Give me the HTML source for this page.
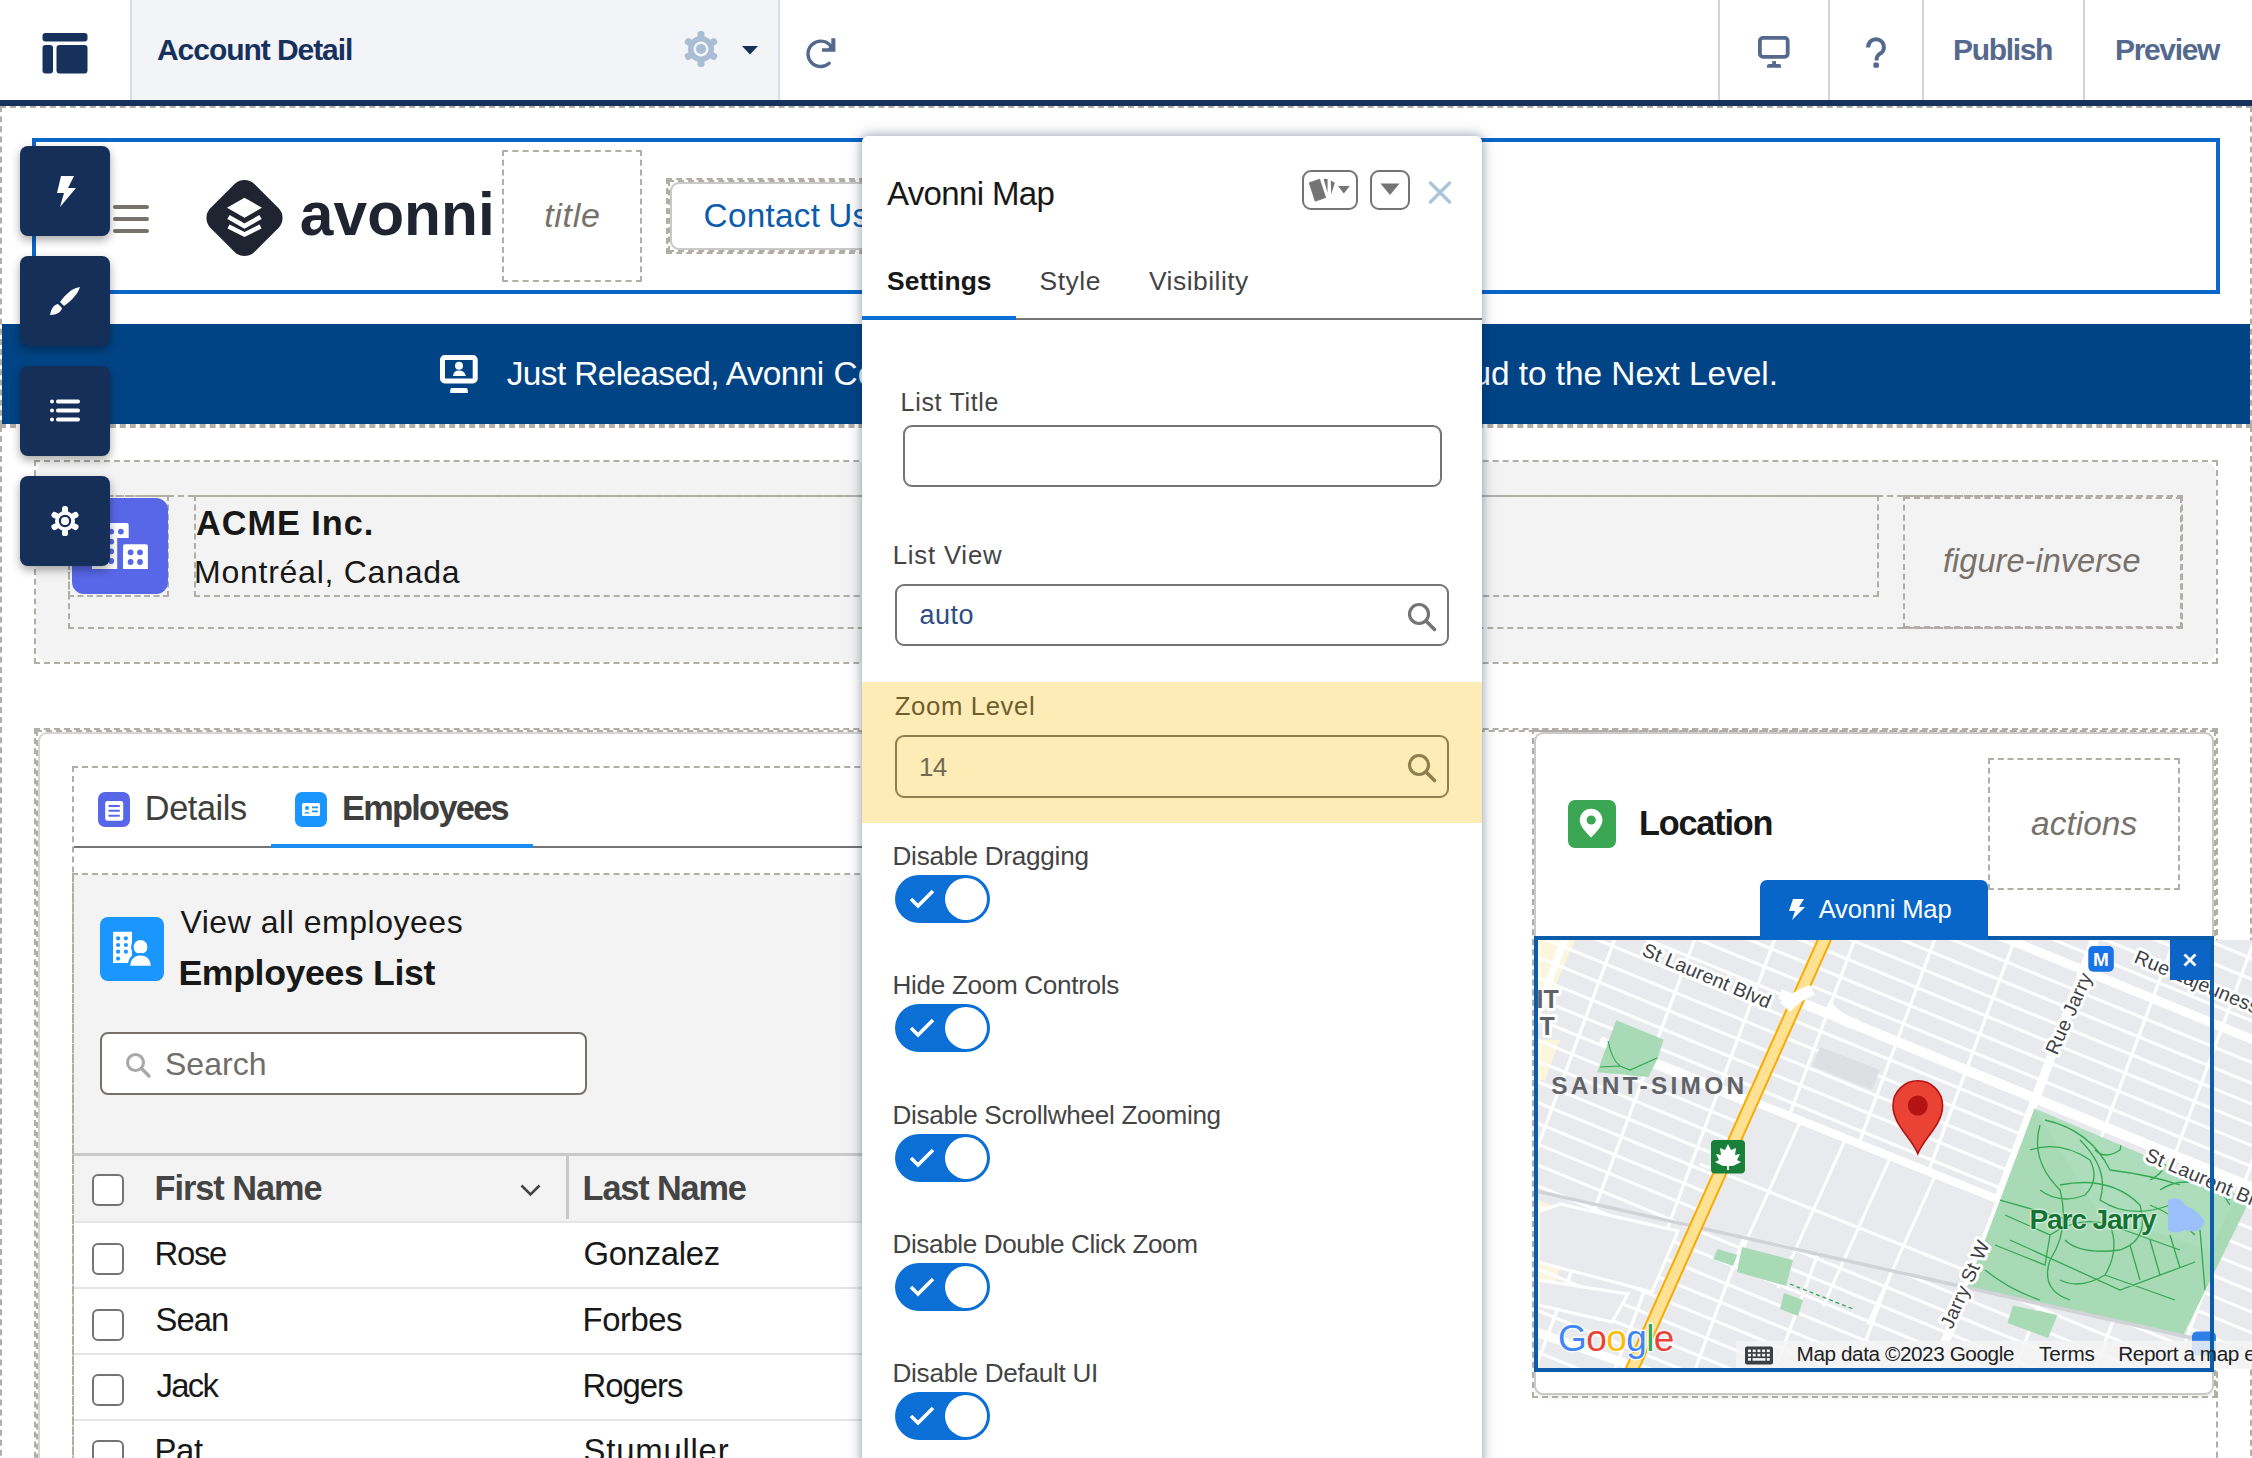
<!DOCTYPE html>
<html><head><meta charset="utf-8"><title>Account Detail</title><style>
html,body{margin:0;padding:0;width:2252px;height:1458px;overflow:hidden;background:#fff;position:relative;font-family:"Liberation Sans",sans-serif}
.t{position:absolute;white-space:nowrap;line-height:1}
.a{position:absolute;box-sizing:border-box}
.d{position:absolute;box-sizing:border-box;border:2px dashed #b1ada7}
svg{position:absolute;overflow:visible}
.tb{position:absolute;left:20px;width:90px;height:90px;background:#152f59;border-radius:8px;box-shadow:0 4px 10px rgba(0,0,0,.35)}
.cb{position:absolute;left:92px;width:32px;height:32px;box-sizing:border-box;border:2px solid #747474;border-radius:6px;background:#fff}
.tg{position:absolute;left:894.5px;width:95px;height:48px;border-radius:24px;background:#0b6fd6}
.tg:after{content:"";position:absolute;right:3px;top:3px;width:42px;height:42px;border-radius:50%;background:#fff}
</style></head><body>

<!-- ============ TOP BAR ============ -->
<div class="a" style="left:0;top:0;width:2252px;height:100px;background:#fff"></div>
<div class="a" style="left:130px;top:0;width:650px;height:100px;background:#f3f4f8;border-left:2px solid #d8dde6;border-right:2px solid #d8dde6"></div>
<div class="a" style="left:0;top:100px;width:2252px;height:6px;background:#16325c"></div>
<div class="a" style="left:1718px;top:0;width:2px;height:100px;background:#d4d4d4"></div>
<div class="a" style="left:1828px;top:0;width:2px;height:100px;background:#d4d4d4"></div>
<div class="a" style="left:1922px;top:0;width:2px;height:100px;background:#d4d4d4"></div>
<div class="a" style="left:2083px;top:0;width:2px;height:100px;background:#d4d4d4"></div>
<!-- logo icon -->
<svg style="left:42px;top:32px" width="46" height="42" viewBox="0 0 46 42"><rect x="0.5" y="1" width="45" height="8.5" rx="3" fill="#16325c"/><rect x="0.5" y="13" width="10.5" height="28.5" rx="3" fill="#16325c"/><rect x="14.5" y="13" width="31" height="28.5" rx="3" fill="#16325c"/></svg>
<!-- gear -->
<svg style="left:683px;top:31px" width="36" height="36" viewBox="-18 -18 36 36"><g fill="#a9bed5"><circle r="13"/><rect x="-3.5" y="-18" width="7" height="8" rx="3" transform="rotate(0)"/><rect x="-3.5" y="-18" width="7" height="8" rx="3" transform="rotate(60)"/><rect x="-3.5" y="-18" width="7" height="8" rx="3" transform="rotate(120)"/><rect x="-3.5" y="-18" width="7" height="8" rx="3" transform="rotate(180)"/><rect x="-3.5" y="-18" width="7" height="8" rx="3" transform="rotate(240)"/><rect x="-3.5" y="-18" width="7" height="8" rx="3" transform="rotate(300)"/></g><circle r="7.5" fill="#f3f4f8"/><circle r="5" fill="#a9bed5"/></svg>
<svg style="left:742px;top:45.5px" width="16" height="9" viewBox="0 0 16 9"><path d="M0 0H16L8 8.5Z" fill="#16325c"/></svg>
<!-- refresh -->
<svg style="left:796px;top:28px" width="50" height="50" viewBox="796 28 50 50"><path d="M829.2 63.3 A12.7 12.7 0 1 1 830.2 45.4" fill="none" stroke="#54698d" stroke-width="3.4" stroke-linecap="round"/><path d="M831.3 38.3 L835.4 38.3 L835.4 51.7 L822 51.7 L822 48.2 L828 48.2 L831.3 45Z" fill="#54698d"/></svg>
<!-- monitor -->
<svg style="left:1758px;top:36px" width="32" height="32" viewBox="0 0 32 32"><rect x="1.9" y="1.9" width="27.8" height="18.9" rx="3" fill="none" stroke="#54698d" stroke-width="3.8"/><rect x="14.2" y="25.1" width="3.8" height="3.5" fill="#54698d"/><path d="M9 31.8 V30.1 Q9 28.1 11 28.1 H21.1 Q23.1 28.1 23.1 30.1 V31.8Z" fill="#54698d"/></svg>
<!-- question -->
<svg style="left:1866px;top:38px" width="20" height="30" viewBox="0 0 20 30"><path d="M2.1 9.5 A7.9 7.9 0 1 1 15.5 14.8 Q10.8 17.3 10.6 20.8 V22.4" fill="none" stroke="#54698d" stroke-width="3.9"/><rect x="7.4" y="24.5" width="5.5" height="5.2" rx="1.5" fill="#54698d"/></svg>
<div class="t" style="left:157.00px;top:34.65px;font-size:30.00px;color:#16325c;font-weight:bold;letter-spacing:-1.053px;">Account Detail</div>
<div class="t" style="left:1953.00px;top:34.65px;font-size:30.00px;color:#54698d;font-weight:bold;letter-spacing:-1.336px;">Publish</div>
<div class="t" style="left:2115.00px;top:34.65px;font-size:30.00px;color:#54698d;font-weight:bold;letter-spacing:-1.346px;">Preview</div>

<!-- ============ HEADER SECTION ============ -->
<div class="d" style="left:0;top:106px;width:2252px;height:320px"></div>
<div class="d" style="left:0;top:426px;width:2252px;height:1100px"></div>
<div class="a" style="left:32px;top:138px;width:2188px;height:156px;border:4px solid #0a66c9"></div>
<div class="a" style="left:113px;top:204.5px;width:36px;height:4px;border-radius:2px;background:#78726c"></div>
<div class="a" style="left:113px;top:217px;width:36px;height:4px;border-radius:2px;background:#78726c"></div>
<div class="a" style="left:113px;top:229px;width:36px;height:4px;border-radius:2px;background:#78726c"></div>
<svg style="left:206px;top:180px" width="77" height="77" viewBox="0 0 77 77"><rect x="7.5" y="7" width="62" height="62" rx="14" transform="rotate(45 38.5 38)" fill="#1f2430"/><path d="M38.5 17.7 L56 27.7 L38.5 37.7 L21 27.7Z" fill="#fff"/><polyline points="22.5,37 38.5,46 54.5,37" fill="none" stroke="#fff" stroke-width="4.6"/><polyline points="22.5,46.5 38.5,54.5 54.5,46.5" fill="none" stroke="#fff" stroke-width="4.6"/></svg>
<div class="d" style="left:502px;top:150px;width:140px;height:132px"></div>
<div class="d" style="left:666px;top:178px;width:260px;height:76px"></div>
<div class="d" style="left:668px;top:180px;width:258px;height:72px"></div>
<div class="a" style="left:670px;top:182px;width:250px;height:68px;border:2px solid #c9c9c9;border-radius:9px;background:#fff"></div>
<div class="a" style="left:2px;top:324px;width:2248px;height:100px;background:#014486"></div>
<svg style="left:440px;top:355px" width="38" height="39" viewBox="0 0 38 39"><rect x="2.5" y="2.5" width="32.7" height="23.4" rx="2.2" fill="none" stroke="#fff" stroke-width="5"/><circle cx="19" cy="10.8" r="4" fill="#fff"/><path d="M13 21 Q13.6 15.6 19 15.6 Q24.4 15.6 25.8 21Z" fill="#fff"/><path d="M11.5 33 H26.3 Q27.8 33 27.8 35.5 V38 H10.2 V35.5 Q10.2 33 11.5 33Z" fill="#fff"/></svg>
<div class="t" style="left:299.80px;top:183.98px;font-size:60.38px;color:#1f2430;font-weight:bold;letter-spacing:0.090px;">avonni</div>
<div class="t" style="left:544.20px;top:198.27px;font-size:34.00px;color:#77716b;font-style:italic;letter-spacing:0.700px;">title</div>
<div class="t" style="left:703.60px;top:198.97px;font-size:33.29px;color:#0b5cab;letter-spacing:0.267px;">Contact</div>
<div class="t" style="left:828.30px;top:198.97px;font-size:33.29px;color:#0b5cab;letter-spacing:0.270px;">Us</div>
<div class="t" style="left:506.80px;top:356.85px;font-size:33.43px;color:#ffffff;letter-spacing:-0.639px;">Just Released, Avonni</div>
<div class="t" style="left:833.60px;top:356.85px;font-size:33.43px;color:#ffffff;">Components:</div>
<div class="t" style="left:1255.72px;top:356.85px;font-size:33.43px;color:#ffffff;letter-spacing:-0.047px;">Salesforce Cloud to the Next Level.</div>

<!-- ============ ACME ============ -->
<div class="a" style="left:36px;top:462px;width:2180px;height:200px;background:#f3f3f3;border-radius:12px"></div>
<div class="d" style="left:34px;top:460px;width:2184px;height:204px"></div>
<div class="d" style="left:68px;top:495px;width:2115px;height:134px"></div>
<div class="d" style="left:68px;top:495px;width:101px;height:102px"></div>
<div class="a" style="left:72px;top:498px;width:96px;height:96px;background:#5867e8;border-radius:12px"></div>
<svg style="left:72px;top:498px" width="96" height="96" viewBox="0 0 96 96"><path d="M20 71 V27 a2 2 0 0 1 2-2 H54.7 a2 2 0 0 1 2 2 V40 H45.2 V71 Z" fill="#fff"/><path d="M51 71 V48.3 a2 2 0 0 1 2-2 H73.9 a2 2 0 0 1 2 2 V71Z" fill="#fff"/><g fill="#5867e8"><circle cx="48.9" cy="33.6" r="2.9"/><circle cx="39.2" cy="33.6" r="2.9"/><circle cx="39.2" cy="43.6" r="2.9"/><circle cx="39.2" cy="53.3" r="2.9"/><circle cx="39.2" cy="63" r="2.9"/><circle cx="29.5" cy="33.6" r="2.9"/><circle cx="29.5" cy="43.6" r="2.9"/><circle cx="29.5" cy="53.3" r="2.9"/><circle cx="29.5" cy="63" r="2.9"/><circle cx="58.6" cy="54.3" r="2.9"/><circle cx="68" cy="54.3" r="2.9"/><circle cx="58.6" cy="64" r="2.9"/><circle cx="68" cy="64" r="2.9"/></g></svg>
<div class="d" style="left:194px;top:495px;width:1685px;height:102px"></div>
<div class="d" style="left:1903px;top:495px;width:280px;height:134px"></div>
<div class="d" style="left:1904px;top:497px;width:278px;height:131px;border-left:none"></div>
<div class="t" style="left:196.00px;top:506.03px;font-size:34.29px;color:#181818;font-weight:bold;letter-spacing:0.973px;">ACME Inc.</div>
<div class="t" style="left:194.00px;top:556.36px;font-size:32.00px;color:#181818;letter-spacing:0.748px;">Montréal, Canada</div>
<div class="t" style="left:1943.00px;top:545.34px;font-size:32.50px;color:#77716b;font-style:italic;letter-spacing:0.045px;">figure-inverse</div>

<!-- ============ TABS / TABLE ============ -->
<div class="d" style="left:34px;top:728px;width:2184px;height:800px"></div>
<div class="d" style="left:36px;top:730px;width:2180px;height:800px;border-right:none"></div>
<div class="a" style="left:38px;top:732px;width:1440px;height:800px;border:2px solid #d4d4d4;border-radius:9px;background:#fff"></div>
<div class="d" style="left:72px;top:766px;width:1400px;height:800px"></div>
<div class="a" style="left:74px;top:846px;width:1400px;height:2px;background:#747474"></div>
<div class="a" style="left:271px;top:843.5px;width:262px;height:4px;background:#1b8cf0"></div>
<div class="a" style="left:98px;top:792px;width:32px;height:35px;background:#5867e8;border-radius:7px"></div>
<svg style="left:98px;top:792px" width="32" height="35" viewBox="0 0 32 35"><rect x="7.2" y="9" width="18" height="19.7" rx="2.2" fill="#fff"/><g fill="#5867e8"><rect x="10.3" y="12.9" width="11.7" height="2" rx="1"/><rect x="10.3" y="17.8" width="11.7" height="2" rx="1"/><rect x="10.3" y="22.8" width="11.7" height="2" rx="1"/></g></svg>
<div class="a" style="left:295px;top:792px;width:32px;height:35px;background:#1b96ff;border-radius:7px"></div>
<svg style="left:295px;top:792px" width="32" height="35" viewBox="0 0 32 35"><rect x="7" y="11" width="18" height="13" rx="1.5" fill="#fff"/><g fill="#1b96ff"><circle cx="12" cy="16" r="2"/><path d="M9 21.5 q3-3.5 6 0z"/><rect x="17" y="14.5" width="6" height="1.8"/><rect x="17" y="18.5" width="6" height="1.8"/></g></svg>
<div class="d" style="left:72px;top:873px;width:1400px;height:700px"></div>
<div class="a" style="left:74px;top:875px;width:1400px;height:278px;background:#f3f3f3"></div>
<div class="a" style="left:100px;top:917px;width:64px;height:64px;background:#1b96ff;border-radius:8px"></div>
<svg style="left:100px;top:917px" width="64" height="64" viewBox="0 0 64 64"><path d="M13 46 V16 a1.2 1.2 0 0 1 1.2-1.2 H32 V46Z" fill="#fff"/><g fill="#1b96ff"><circle cx="18.1" cy="21.3" r="2.1"/><circle cx="25.9" cy="21.3" r="2.1"/><circle cx="18.1" cy="28" r="2.1"/><circle cx="25.9" cy="28" r="2.1"/><circle cx="18.1" cy="34.7" r="2.1"/><circle cx="25.9" cy="34.7" r="2.1"/><circle cx="18.1" cy="41.6" r="2.1"/></g><circle cx="40.5" cy="30" r="8.2" fill="#fff" stroke="#1b96ff" stroke-width="2.6"/><path d="M28.7 50.1 Q29.5 37.2 40.5 37.2 Q51.5 37.2 52.3 50.1Z" fill="#fff" stroke="#1b96ff" stroke-width="2.6" stroke-linejoin="round"/><rect x="26" y="50.1" width="30" height="4" fill="#1b96ff"/></svg>
<div class="a" style="left:100px;top:1032px;width:487px;height:63px;border:2px solid #77716b;border-radius:8px;background:#fff"></div>
<svg style="left:125px;top:1052px" width="26" height="26" viewBox="0 0 26 26"><circle cx="10.5" cy="10.5" r="8" fill="none" stroke="#a8a8a8" stroke-width="3"/><path d="M16.5 16.5L24 24" stroke="#a8a8a8" stroke-width="3.4" stroke-linecap="round"/></svg>
<div class="a" style="left:74px;top:1153px;width:1400px;height:3px;background:#c9c9c9"></div>
<div class="a" style="left:74px;top:1156px;width:1400px;height:65px;background:#f3f3f3"></div>
<div class="a" style="left:74px;top:1221px;width:1400px;height:300px;background:#fff"></div>
<div class="a" style="left:74px;top:1221px;width:1400px;height:2px;background:#e5e5e5"></div>
<div class="a" style="left:74px;top:1287px;width:1400px;height:2px;background:#e5e5e5"></div>
<div class="a" style="left:74px;top:1353px;width:1400px;height:2px;background:#e5e5e5"></div>
<div class="a" style="left:74px;top:1418.5px;width:1400px;height:2px;background:#e5e5e5"></div>
<div class="a" style="left:566px;top:1156px;width:2.5px;height:63px;background:#c9c9c9"></div>
<svg style="left:520px;top:1184px" width="21" height="13" viewBox="0 0 21 13"><path d="M1.5 1.5L10.5 10.5L19.5 1.5" fill="none" stroke="#444" stroke-width="2.6"/></svg>
<div class="cb" style="top:1174px"></div>
<div class="cb" style="top:1243px"></div>
<div class="cb" style="top:1308.7px"></div>
<div class="cb" style="top:1374.4px"></div>
<div class="cb" style="top:1440.1px"></div>
<div class="t" style="left:144.80px;top:791.03px;font-size:34.29px;color:#3e3e3c;letter-spacing:-0.401px;">Details</div>
<div class="t" style="left:342.00px;top:791.03px;font-size:34.29px;color:#3e3e3c;font-weight:bold;letter-spacing:-1.672px;">Employees</div>
<div class="t" style="left:180.40px;top:905.96px;font-size:32.00px;color:#181818;letter-spacing:0.528px;">View all employees</div>
<div class="t" style="left:178.40px;top:955.82px;font-size:35.71px;color:#181818;font-weight:bold;letter-spacing:-0.379px;">Employees List</div>
<div class="t" style="left:165.00px;top:1047.76px;font-size:32.00px;color:#706e6b;letter-spacing:0.021px;">Search</div>
<div class="t" style="left:154.50px;top:1171.03px;font-size:34.29px;color:#444444;font-weight:bold;letter-spacing:-1.005px;">First Name</div>
<div class="t" style="left:582.60px;top:1171.03px;font-size:34.29px;color:#444444;font-weight:bold;letter-spacing:-1.143px;">Last Name</div>
<div class="t" style="left:154.50px;top:1238.24px;font-size:32.86px;color:#181818;letter-spacing:-1.302px;">Rose</div>
<div class="t" style="left:583.60px;top:1238.24px;font-size:32.86px;color:#181818;letter-spacing:-0.319px;">Gonzalez</div>
<div class="t" style="left:155.50px;top:1303.94px;font-size:32.86px;color:#181818;letter-spacing:-0.980px;">Sean</div>
<div class="t" style="left:582.60px;top:1303.94px;font-size:32.86px;color:#181818;letter-spacing:-0.480px;">Forbes</div>
<div class="t" style="left:156.50px;top:1369.64px;font-size:32.86px;color:#181818;letter-spacing:-1.703px;">Jack</div>
<div class="t" style="left:582.60px;top:1369.64px;font-size:32.86px;color:#181818;letter-spacing:-1.011px;">Rogers</div>
<div class="t" style="left:154.50px;top:1435.34px;font-size:32.86px;color:#181818;letter-spacing:-0.386px;">Pat</div>
<div class="t" style="left:583.60px;top:1435.34px;font-size:32.86px;color:#181818;letter-spacing:0.777px;">Stumuller</div>

<!-- ============ LOCATION CARD ============ -->
<div class="a" style="left:1534px;top:732px;width:680px;height:663px;border:2px solid #c9c9c9;border-radius:9px;background:#fff;box-shadow:0 3px 4px rgba(0,0,0,.08)"></div>
<div class="d" style="left:1532px;top:728px;width:686px;height:670px"></div>
<div class="d" style="left:1533px;top:730px;width:683px;height:666px;border-left:none;border-bottom:none"></div>
<div class="a" style="left:1568px;top:800px;width:48px;height:48px;background:#3ba755;border-radius:7px"></div>
<svg style="left:1568px;top:800px" width="48" height="48" viewBox="0 0 48 48"><path d="M23.1 37.6 C18 32.2 11.8 26.5 11.8 20.1 A11.3 11.3 0 0 1 34.4 20.1 C34.4 26.5 28.2 32.2 23.1 37.6Z" fill="#fff"/><circle cx="23.2" cy="20" r="4.6" fill="#3ba755"/></svg>
<div class="d" style="left:1988px;top:758px;width:192px;height:132px"></div>
<div class="a" style="left:1760px;top:880px;width:228px;height:60px;background:#0766c8;border-radius:7px 7px 0 0;z-index:2"></div>
<svg style="z-index:3;left:1787px;top:899px" width="19" height="21" viewBox="0 0 19 21"><path d="M6 0H17L12 8H18L5 21L8 12H2Z" fill="#fff"/></svg>
<div class="t" style="left:1639.00px;top:806.43px;font-size:34.29px;color:#181818;font-weight:bold;letter-spacing:-1.205px;">Location</div>
<div class="t" style="left:2031.00px;top:807.09px;font-size:33.50px;color:#77716b;font-style:italic;letter-spacing:0.018px;">actions</div>
<div class="t" style="left:1818.70px;top:896.79px;font-size:25.57px;color:#ffffff;letter-spacing:-0.179px;z-index:3;">Avonni Map</div>
<svg style="left:1538px;top:940px" width="714" height="428" viewBox="1538 940 714 428">
<defs><clipPath id="mc"><rect x="1538" y="940" width="714" height="428"/></clipPath></defs>
<g clip-path="url(#mc)">
<rect x="1538" y="940" width="714" height="428" fill="#e8eaed"/>
<path d="M1538 940 L1575 940 L1545 1010 L1538 1010Z" fill="#fdf6df"/>
<path d="M1538 1040 L1560 1040 L1545 1080 L1538 1080Z" fill="#fdf6df"/>
<path d="M1538 1200 L1575 1215 L1550 1300 L1538 1300Z" fill="#fdf6df"/>
<path d="M1533 643.0 L2257 939.8 M1533 663.8 L2257 960.6 M1533 684.6 L2257 981.4 M1533 705.4 L2257 1002.2 M1533 726.2 L2257 1023.0 M1533 747.0 L2257 1043.8 M1533 767.8 L2257 1064.6 M1533 788.6 L2257 1085.4 M1533 809.4 L2257 1106.2 M1533 830.2 L2257 1127.0 M1533 851.0 L2257 1147.8 M1533 871.8 L2257 1168.6 M1533 892.6 L2257 1189.4 M1533 913.4 L2257 1210.2 M1533 934.2 L2257 1231.0 M1533 955.0 L2257 1251.8 M1533 975.8 L2257 1272.6 M1533 996.6 L2257 1293.4 M1533 1017.4 L2257 1314.2 M1533 1038.2 L2257 1335.0 M1533 1059.0 L2257 1355.8 M1533 1079.8 L2257 1376.6 M1533 1100.5 L2257 1397.4 M1533 1121.4 L2257 1418.2 M1533 1142.2 L2257 1439.0 M1533 1163.0 L2257 1459.8 M1533 1183.8 L2257 1480.6 M1533 1204.5 L2257 1501.4 M1533 1225.4 L2257 1522.2 M1533 1246.2 L2257 1543.0 M1533 1267.0 L2257 1563.8 M1533 1287.8 L2257 1584.6 M1533 1308.5 L2257 1605.4 M1533 1329.4 L2257 1626.2 M1533 1350.2 L2257 1647.0 M1533 1371.0 L2257 1667.8" stroke="#fff" stroke-width="3" fill="none"/>
<path d="M1458.2 930 L1291.9 1378 M1538.2 930 L1371.9 1378 M1618.2 930 L1451.9 1378 M1698.2 930 L1531.9 1378 M1778.2 930 L1611.9 1378 M1858.2 930 L1691.9 1378 M1938.2 930 L1771.9 1378 M2018.2 930 L1851.9 1378 M2098.2 930 L1931.9 1378 M2178.2 930 L2011.9 1378 M2258.2 930 L2091.9 1378 M2338.2 930 L2171.9 1378 M2418.2 930 L2251.9 1378 M2498.2 930 L2331.9 1378 M2578.2 930 L2411.9 1378 M2658.2 930 L2491.9 1378" stroke="#fff" stroke-width="3.2" fill="none"/>
<path d="M1780.0 993.8 L2260.0 1190.6" stroke="#fff" stroke-width="10.0" fill="none" />
<path d="M1960.0 919.6 L2260.0 1042.6" stroke="#fff" stroke-width="9.0" fill="none" />
<path d="M2098.2 930.0 L1931.1 1380.0" stroke="#fff" stroke-width="9.0" fill="none" />
<path d="M1568.0 930.0 L1400.9 1380.0" stroke="#fff" stroke-width="7.0" fill="none" />
<path d="M1752 1103 L1996 1201 L1963 1285 L1698 1225Z" fill="#e8eaed"/>
<path d="M1700.0 1164.2 L1990.0 1280.2" stroke="#fff" stroke-width="3.0" fill="none" />
<path d="M1800.0 1122.2 L1733.0 1270.2" stroke="#fff" stroke-width="3.0" fill="none" />
<path d="M1845.0 1140.2 L1778.0 1288.2" stroke="#fff" stroke-width="3.0" fill="none" />
<path d="M1890.0 1158.2 L1823.0 1306.2" stroke="#fff" stroke-width="3.0" fill="none" />
<path d="M1935.0 1176.2 L1868.0 1324.2" stroke="#fff" stroke-width="3.0" fill="none" />
<path d="M1600.0 1040.2 L2000.0 1200.2" stroke="#fff" stroke-width="8.0" fill="none" />
<path d="M2034.4 1108.6 L2250 1200 L2182.3 1337.2 L1967.2 1287.3Z" fill="#a8dab5"/>
<path d="M2034.4 1108.6 L2236 1196 L2210 1250 L2100 1215Z" fill="#b3dfbf" opacity="0.6"/>
<clipPath id="pk"><path d="M2034.4 1108.6 L2250 1200 L2182.3 1337.2 L1967.2 1287.3Z"/></clipPath>
<path clip-path="url(#pk)" d="M2040 1125 Q2030 1160 2060 1190 Q2070 1230 2050 1260 Q2040 1290 2070 1300 M2010 1240 L2120 1290 L2195 1262 M2000 1200 L2070 1220 M2080 1140 Q2110 1170 2100 1200 Q2130 1220 2170 1205 M2045 1120 Q2090 1130 2110 1170 Q2150 1175 2180 1185 M2060 1185 Q2110 1175 2140 1205 Q2150 1240 2120 1250 Q2080 1255 2065 1240 M2130 1245 L2140 1280 M2150 1240 L2160 1275 M2170 1235 L2180 1268 M2100 1120 Q2125 1130 2120 1150 Q2105 1160 2095 1150 M2160 1190 Q2190 1170 2230 1200 M2030 1150 Q2060 1140 2090 1160 Q2100 1180 2085 1195 Q2060 1205 2040 1190 M2005 1215 L2050 1235 L2045 1265 L1995 1245 M2050 1235 Q2080 1215 2110 1225 Q2120 1250 2105 1275 Q2080 1290 2060 1280 M2110 1225 L2180 1250 M2105 1275 L2175 1300 M2150 1205 Q2175 1215 2195 1235 M2120 1140 Q2140 1125 2165 1150 Q2170 1170 2150 1180 M2185 1165 Q2215 1180 2230 1205 M1985 1270 Q2010 1290 2040 1300 M2200 1230 L2205 1290" stroke="#34a853" stroke-width="1.3" fill="none"/>
<path d="M2168 1200 Q2180 1195 2185 1205 Q2200 1212 2205 1222 Q2200 1235 2185 1230 Q2175 1235 2168 1230Z" fill="#9cc0f9"/>
<path d="M2013 1305.5 L2057.5 1315 L2048 1338 L2007.5 1323Z" fill="#a8dab5"/>
<path d="M1560 1204 L1678 1231 L1652 1292 L1538 1262 L1538 1212Z" fill="#e8eaed" stroke="#fff" stroke-width="3" stroke-linejoin="round"/>
<path d="M1538 1280 L1628 1294 L1612 1322 L1538 1305Z" fill="#e8eaed" stroke="#fff" stroke-width="3"/>
<path d="M1530.0 1330.0 L1650.0 1372.0" stroke="#fff" stroke-width="9.0" fill="none" />
<path d="M1530.0 1189.7 L2260.0 1353.2" stroke="#d2d3d7" stroke-width="3.5" fill="none" />
<path d="M1616.3 1020.3 L1663.5 1039.5 L1657.9 1057.9 L1648.3 1077 L1597 1072.3Z" fill="#a8dab5"/>
<path d="M1608 1041 Q1612 1060 1620 1066 L1630 1070 L1657 1058 M1600 1067 L1620 1066" stroke="#34a853" stroke-width="1.2" fill="none"/>
<path d="M1717.6 1249 L1737.3 1255 L1733 1266 L1713 1259Z" fill="#a8dab5"/>
<path d="M1742 1247 L1793 1260 L1786 1286 L1737 1272Z" fill="#a8dab5"/>
<path d="M1784 1293 L1803 1300 L1798 1316 L1780 1309Z" fill="#a8dab5"/>
<path d="M1790 1284 L1853 1309" stroke="#34a853" stroke-width="1.3" stroke-dasharray="4 3" fill="none"/>
<path d="M1820 1047 L1880 1070 L1872 1090 L1812 1066Z" fill="#dddfe3"/>
<path d="M1828.8 930.0 L1627.2 1380.0" stroke="#f9ab00" stroke-width="14.0" fill="none" />
<path d="M1828.8 930.0 L1627.2 1380.0" stroke="#fde293" stroke-width="10.0" fill="none" />
<path d="M1780 1002 Q1795 990 1810 985 L1815 995 Q1800 1000 1790 1012Z" fill="#fff"/>
<path d="M1830 1000 Q1840 1015 1860 1020 L1855 1030 Q1835 1025 1825 1010Z" fill="#fff"/>
<rect x="1711" y="1140" width="34" height="33.5" rx="4" fill="#188038"/>
<path d="M1728 1144 L1731 1150 L1736 1148 L1735 1155 L1740 1154 L1737 1160 L1741 1162 L1733 1166 L1729 1166 L1729 1170 L1727 1170 L1727 1166 L1723 1166 L1715 1162 L1719 1160 L1716 1154 L1721 1155 L1720 1148 L1725 1150Z" fill="#fff"/>
<rect x="2088.3" y="946" width="25.5" height="25.7" rx="5" fill="#1a73e8"/>
<text x="2101" y="966" font-family="Liberation Sans" font-weight="bold" font-size="19" fill="#fff" text-anchor="middle">M</text>
<rect x="2192" y="1331.5" width="24" height="24" rx="5" fill="#1a73e8" opacity="0.9"/>
<path d="M1917.8 1153.8 C1912 1138 1893 1125 1893 1105.6 A24.8 24.8 0 0 1 1942.6 1105.6 C1942.6 1125 1923.6 1138 1917.8 1153.8Z" fill="#ea4335" stroke="#b31412" stroke-width="1.6"/>
<circle cx="1917.8" cy="1105.6" r="10" fill="#b31412"/>
<text transform="translate(1641 955) rotate(23)" font-family="Liberation Sans" font-size="19.5" fill="#3c4043" style="stroke:#fff;stroke-width:6px;paint-order:stroke;stroke-linejoin:round" letter-spacing="0.3">St Laurent Blvd</text>
<text transform="translate(2144 1160) rotate(23)" font-family="Liberation Sans" font-size="19.5" fill="#3c4043" style="stroke:#fff;stroke-width:6px;paint-order:stroke;stroke-linejoin:round" letter-spacing="0.3">St Laurent Blvd</text>
<text transform="translate(2133 962) rotate(23)" font-family="Liberation Sans" font-size="19.5" fill="#3c4043" style="stroke:#fff;stroke-width:6px;paint-order:stroke;stroke-linejoin:round" letter-spacing="0.3">Rue Lajeunesse</text>
<text transform="translate(2057 1056) rotate(-66)" font-family="Liberation Sans" font-size="19.5" fill="#3c4043" style="stroke:#fff;stroke-width:6px;paint-order:stroke;stroke-linejoin:round" letter-spacing="0.3">Rue Jarry</text>
<text transform="translate(1952 1330) rotate(-66)" font-family="Liberation Sans" font-size="19.5" fill="#3c4043" style="stroke:#fff;stroke-width:6px;paint-order:stroke;stroke-linejoin:round" letter-spacing="0.3">Jarry St W</text>
<text x="1536.5" y="1008.3" font-family="Liberation Sans" font-weight="bold" font-size="25" fill="#5f6368" style="stroke:#fff;stroke-width:6px;paint-order:stroke;stroke-linejoin:round">IT</text>
<text x="1539.5" y="1034.7" font-family="Liberation Sans" font-weight="bold" font-size="25" fill="#5f6368" style="stroke:#fff;stroke-width:6px;paint-order:stroke;stroke-linejoin:round">T</text>
</g>
<rect x="1736" y="1340.8" width="520" height="28" fill="#f5f5f5" opacity="0.85"/>
<rect x="1745" y="1346.5" width="28" height="18" rx="2" fill="#3c4043"/>
<rect x="1748.0" y="1349.5" width="3" height="2.6" fill="#f5f5f5"/><rect x="1752.7" y="1349.5" width="3" height="2.6" fill="#f5f5f5"/><rect x="1757.4" y="1349.5" width="3" height="2.6" fill="#f5f5f5"/><rect x="1762.1" y="1349.5" width="3" height="2.6" fill="#f5f5f5"/><rect x="1766.8" y="1349.5" width="3" height="2.6" fill="#f5f5f5"/><rect x="1748.0" y="1353.8" width="3" height="2.6" fill="#f5f5f5"/><rect x="1752.7" y="1353.8" width="3" height="2.6" fill="#f5f5f5"/><rect x="1757.4" y="1353.8" width="3" height="2.6" fill="#f5f5f5"/><rect x="1762.1" y="1353.8" width="3" height="2.6" fill="#f5f5f5"/><rect x="1766.8" y="1353.8" width="3" height="2.6" fill="#f5f5f5"/><rect x="1748.0" y="1358.1" width="3" height="2.6" fill="#f5f5f5"/><rect x="1766.8" y="1358.1" width="3" height="2.6" fill="#f5f5f5"/><rect x="1752.5" y="1358.1" width="13" height="2.6" fill="#f5f5f5"/>
<text x="1558" y="1351" font-family="Liberation Sans" font-size="37" stroke="#fff" stroke-width="2.5" paint-order="stroke" letter-spacing="-0.6"><tspan fill="#4285f4">G</tspan><tspan fill="#ea4335">o</tspan><tspan fill="#fbbc04">o</tspan><tspan fill="#4285f4">g</tspan><tspan fill="#34a853">l</tspan><tspan fill="#ea4335">e</tspan></text>
</svg>
<div class="a" style="left:1534px;top:936px;width:680px;height:436px;border:4px solid #0b5cab"></div>
<div class="a" style="left:2170px;top:940px;width:40px;height:40px;background:#0b64c6"></div>
<svg style="left:2183px;top:953px" width="14" height="14" viewBox="0 0 14 14"><path d="M1.5 1.5L12.5 12.5M12.5 1.5L1.5 12.5" stroke="#fff" stroke-width="2.8"/></svg>
<div class="t" style="left:1796.60px;top:1344.40px;font-size:20.71px;color:#202124;letter-spacing:-0.404px;">Map data ©2023 Google</div>
<div class="t" style="left:2039.00px;top:1344.40px;font-size:20.71px;color:#202124;letter-spacing:-0.101px;">Terms</div>
<div class="t" style="left:2118.30px;top:1344.40px;font-size:20.71px;color:#202124;letter-spacing:-0.400px;">Report a map error</div>
<div class="t" style="left:1551.30px;top:1073.86px;font-size:24.43px;color:#5f6368;font-weight:bold;letter-spacing:3.263px;">SAINT-SIMON</div>
<div class="t" style="left:2029.40px;top:1205.72px;font-size:28.14px;color:#137333;font-weight:bold;letter-spacing:-1.153px;text-shadow:0 0 3px #fff,0 0 2px #fff;">Parc Jarry</div>

<!-- ============ LEFT TOOLBAR ============ -->
<div class="tb" style="top:146px"></div>
<svg style="left:55px;top:176px" width="22" height="32" viewBox="0 0 22 32"><path d="M6 0H19L13 12H21L5 31L9 17H2Z" fill="#fff"/></svg>
<div class="tb" style="top:256px"></div>
<svg style="left:49px;top:285px" width="32" height="32" viewBox="0 0 32 32"><path d="M31 2 C29 9 22 16 15 21 L11 17 C16 10 23 3 31 2Z" fill="#fff"/><path d="M9 19 L13 23 C12 27 8 30 1 30 C2 25 4 20 9 19Z" fill="#fff"/></svg>
<div class="tb" style="top:366px"></div>
<svg style="left:50px;top:399px" width="30" height="23" viewBox="0 0 30 23"><g fill="#fff"><circle cx="2" cy="2.5" r="2"/><circle cx="2" cy="11.5" r="2"/><circle cx="2" cy="20.5" r="2"/><rect x="6" y="0.6" width="24" height="3.8" rx="1.9"/><rect x="6" y="9.6" width="24" height="3.8" rx="1.9"/><rect x="6" y="18.6" width="24" height="3.8" rx="1.9"/></g></svg>
<div class="tb" style="top:476px"></div>
<svg style="left:51px;top:506px" width="28" height="30" viewBox="-14 -15 28 30"><g fill="#fff"><circle r="10"/><rect x="-3" y="-15" width="6" height="7" rx="2.6" transform="rotate(0)"/><rect x="-3" y="-15" width="6" height="7" rx="2.6" transform="rotate(60)"/><rect x="-3" y="-15" width="6" height="7" rx="2.6" transform="rotate(120)"/><rect x="-3" y="-15" width="6" height="7" rx="2.6" transform="rotate(180)"/><rect x="-3" y="-15" width="6" height="7" rx="2.6" transform="rotate(240)"/><rect x="-3" y="-15" width="6" height="7" rx="2.6" transform="rotate(300)"/></g><circle r="6.2" fill="#152f59"/><circle r="4" fill="#fff"/></svg>

<!-- ============ PANEL ============ -->
<div class="a" style="left:862px;top:136px;width:620px;height:1400px;background:#fff;border-radius:6px;box-shadow:0 0 8px 1px rgba(25,45,75,.32),0 0 18px 2px rgba(25,45,75,.12);z-index:10">
</div>
<div class="a" style="left:0;top:0;width:2252px;height:1458px;z-index:11;pointer-events:none">
<div class="a" style="left:1302px;top:170px;width:56px;height:40px;border:2px solid #747474;border-radius:9px"></div>
<svg style="left:1300px;top:170px" width="60" height="40" viewBox="1300 170 60 40"><path d="M1309.2 182.8 L1319.6 179.2 L1325.6 197.6 L1315.2 201.2Z" fill="#747474" stroke="#747474" stroke-width="0.8" stroke-linejoin="round"/><path d="M1323.6 178.8 L1327.6 179 L1327.5 192.8Z" fill="#747474"/><path d="M1330.8 180.6 L1334.8 182.8 L1331.2 194.4Z" fill="#747474"/><path d="M1338 186 H1349.8 L1343.8 193.6Z" fill="#747474"/></svg>
<div class="a" style="left:1370px;top:170px;width:40px;height:40px;border:2px solid #747474;border-radius:9px"></div>
<svg style="left:1380px;top:183px" width="20" height="13" viewBox="0 0 20 13"><path d="M0.5 0.5H19.5L10 12Z" fill="#747474"/></svg>
<svg style="left:1428px;top:181px" width="24" height="23" viewBox="0 0 24 23"><path d="M2.5 2L21.5 21M21.5 2L2.5 21" stroke="#aac4dc" stroke-width="3.4" stroke-linecap="round"/></svg>
<div class="a" style="left:862px;top:318px;width:620px;height:2px;background:#747474"></div>
<div class="a" style="left:862px;top:316px;width:154px;height:4px;background:#0b6fd6"></div>
<div class="a" style="left:902.6px;top:424.8px;width:539px;height:62.5px;border:2px solid #747474;border-radius:9px"></div>
<div class="a" style="left:894.7px;top:583.8px;width:554.6px;height:62.5px;border:2px solid #747474;border-radius:9px"></div>
<svg style="left:1407px;top:602px" width="30" height="30" viewBox="0 0 30 30"><circle cx="12" cy="12" r="9.5" fill="none" stroke="#747474" stroke-width="3.2"/><path d="M19 19L27.5 27.5" stroke="#747474" stroke-width="3.6" stroke-linecap="round"/></svg>
<div class="a" style="left:862px;top:682px;width:620px;height:141px;background:#feecb6"></div>
<div class="a" style="left:894.7px;top:735px;width:554.6px;height:62.5px;border:2px solid #8f7e4e;border-radius:9px"></div>
<svg style="left:1407px;top:753px" width="30" height="30" viewBox="0 0 30 30"><circle cx="12" cy="12" r="9.5" fill="none" stroke="#8f7e4e" stroke-width="3.2"/><path d="M19 19L27.5 27.5" stroke="#8f7e4e" stroke-width="3.6" stroke-linecap="round"/></svg>
<div class="tg" style="top:875px"></div>
<div class="tg" style="top:1004.3px"></div>
<div class="tg" style="top:1133.5px"></div>
<div class="tg" style="top:1262.8px"></div>
<div class="tg" style="top:1392px"></div>
<svg style="left:909px;top:889px" width="26" height="20" viewBox="0 0 26 20"><path d="M2 10L9 17L24 2" fill="none" stroke="#fff" stroke-width="3.6"/></svg>
<svg style="left:909px;top:1018.3px" width="26" height="20" viewBox="0 0 26 20"><path d="M2 10L9 17L24 2" fill="none" stroke="#fff" stroke-width="3.6"/></svg>
<svg style="left:909px;top:1147.5px" width="26" height="20" viewBox="0 0 26 20"><path d="M2 10L9 17L24 2" fill="none" stroke="#fff" stroke-width="3.6"/></svg>
<svg style="left:909px;top:1276.8px" width="26" height="20" viewBox="0 0 26 20"><path d="M2 10L9 17L24 2" fill="none" stroke="#fff" stroke-width="3.6"/></svg>
<svg style="left:909px;top:1406px" width="26" height="20" viewBox="0 0 26 20"><path d="M2 10L9 17L24 2" fill="none" stroke="#fff" stroke-width="3.6"/></svg>
<div class="t" style="left:887.00px;top:176.72px;font-size:33.00px;color:#181818;letter-spacing:-0.646px;">Avonni Map</div>
<div class="t" style="left:887.00px;top:267.67px;font-size:26.43px;color:#181818;font-weight:bold;letter-spacing:0.045px;">Settings</div>
<div class="t" style="left:1039.50px;top:267.67px;font-size:26.43px;color:#444444;letter-spacing:0.520px;">Style</div>
<div class="t" style="left:1149.00px;top:267.67px;font-size:26.43px;color:#444444;letter-spacing:0.478px;">Visibility</div>
<div class="t" style="left:900.60px;top:390.38px;font-size:25.00px;color:#444444;letter-spacing:0.684px;">List Title</div>
<div class="t" style="left:892.70px;top:542.77px;font-size:25.71px;color:#444444;letter-spacing:0.810px;">List View</div>
<div class="t" style="left:919.60px;top:601.68px;font-size:27.00px;color:#2e4d84;letter-spacing:0.489px;">auto</div>
<div class="t" style="left:894.70px;top:694.27px;font-size:25.71px;color:#6e5e30;letter-spacing:0.636px;">Zoom Level</div>
<div class="t" style="left:919.00px;top:754.03px;font-size:26.00px;color:#716a55;letter-spacing:-0.760px;">14</div>
<div class="t" style="left:892.50px;top:843.21px;font-size:26.14px;color:#444444;letter-spacing:-0.265px;">Disable Dragging</div>
<div class="t" style="left:892.50px;top:972.46px;font-size:26.14px;color:#444444;letter-spacing:-0.320px;">Hide Zoom Controls</div>
<div class="t" style="left:892.50px;top:1101.71px;font-size:26.14px;color:#444444;letter-spacing:-0.317px;">Disable Scrollwheel Zooming</div>
<div class="t" style="left:892.50px;top:1230.96px;font-size:26.14px;color:#444444;letter-spacing:-0.400px;">Disable Double Click Zoom</div>
<div class="t" style="left:892.50px;top:1360.21px;font-size:26.14px;color:#444444;letter-spacing:-0.281px;">Disable Default UI</div>
</div>
</body></html>
